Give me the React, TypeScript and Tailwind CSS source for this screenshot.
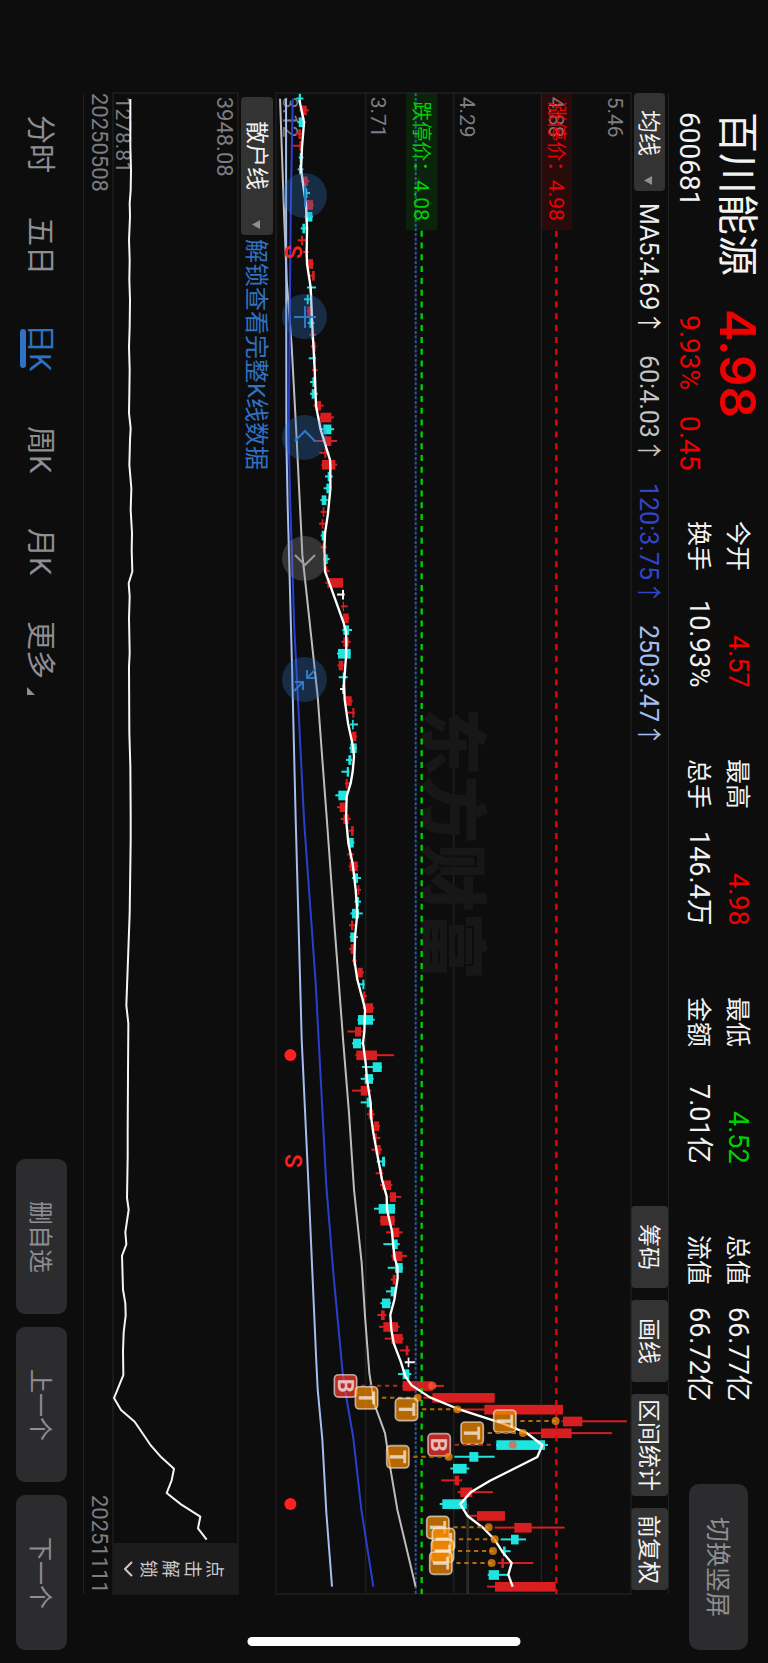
import { Fragment } from 'react'
import type { ReactNode } from 'react'

// The whole screen is a landscape view turned clockwise: with vertical-rl and
// sideways glyphs, "rows" run from top to bottom and "columns" from right to left.

type Candle = [number, number, number, number, 'r' | 'c' | 'w']

// low, body start, body end, high, colour
const candles: Candle[] = [
  [199, 206, 213, 220, 'c'], [208, 214, 230, 236, 'r'], [202, 206, 223, 226, 'c'], [198, 205, 213, 216, 'r'],
  [188, 208, 214, 214, 'r'], [206, 209, 216, 220, 'c'], [203, 207, 214, 220, 'c'], [212, 218, 233, 238, 'r'],
  [224, 228, 232, 240, 'c'], [224, 230, 249, 251, 'r'], [224, 227, 247, 249, 'c'], [212, 217, 226, 230, 'c'],
  [203, 213, 219, 228, 'r'], [219, 226, 229, 236, 'r'], [230, 232, 249, 251, 'r'], [238, 246, 254, 254, 'r'],
  [231, 238, 243, 258, 'c'], [222, 230, 236, 240, 'c'], [230, 232, 247, 249, 'r'], [233, 238, 249, 253, 'c'],
  [238, 243, 247, 258, 'r'], [242, 250, 257, 259, 'r'], [236, 250, 256, 258, 'c'], [246, 252, 256, 263, 'r'],
  [240, 247, 253, 257, 'c'], [240, 245, 254, 263, 'c'], [250, 256, 273, 281, 'r'], [268, 271, 304, 312, 'r'],
  [273, 280, 304, 312, 'c'], [250, 282, 304, 321, 'r'], [268, 283, 289, 298, 'r'], [274, 276, 316, 321, 'r'],
  [285, 293, 299, 308, 'c'], [281, 289, 297, 304, 'c'], [271, 275, 289, 293, 'c'], [272, 278, 283, 290, 'r'],
  [267, 275, 280, 286, 'r'], [272, 275, 284, 286, 'c'], [272, 278, 284, 290, 'r'], [280, 285, 293, 299, 'c'],
  [282, 286, 292, 299, 'r'], [286, 292, 339, 340, 'r'], [321, 336, 342, 344, 'w'], [333, 338, 342, 353, 'r'],
  [336, 339, 356, 358, 'r'], [337, 340, 357, 366, 'c'], [334, 340, 356, 362, 'r'], [321, 324, 362, 362, 'c'],
  [322, 326, 340, 345, 'r'], [326, 338, 342, 353, 'c'], [330, 337, 342, 345, 'w'], [342, 344, 365, 368, 'r'],
  [353, 367, 373, 375, 'r'], [360, 366, 371, 384, 'c'], [361, 365, 379, 381, 'r'], [358, 361, 380, 381, 'c'],
  [348, 355, 364, 366, 'c'], [334, 350, 357, 358, 'c'], [345, 347, 353, 362, 'r'], [316, 325, 352, 354, 'c'],
  [321, 329, 346, 349, 'r'], [332, 340, 356, 362, 'r'], [356, 363, 371, 372, 'r'], [353, 356, 371, 373, 'c'],
  [352, 358, 363, 372, 'r'], [356, 359, 383, 385, 'r'], [366, 375, 384, 393, 'c'], [376, 383, 388, 393, 'r'],
  [374, 379, 387, 393, 'c'], [361, 366, 387, 398, 'c'], [357, 363, 370, 376, 'r'], [359, 361, 378, 384, 'c'],
  [357, 362, 373, 378, 'r'], [366, 369, 378, 380, 'r'], [377, 383, 398, 402, 'r'], [384, 397, 403, 404, 'c'],
  [392, 399, 405, 411, 'r'], [398, 405, 429, 433, 'r'], [382, 384, 429, 434, 'c'], [352, 375, 393, 400, 'r'],
  [366, 369, 393, 400, 'c'], [376, 379, 441, 492, 'r'], [396, 428, 455, 456, 'c'], [392, 404, 429, 431, 'c'],
  [366, 392, 413, 424, 'r'], [392, 410, 421, 424, 'c'], [411, 416, 430, 434, 'r'], [426, 432, 447, 450, 'r'],
  [428, 433, 440, 451, 'r'], [424, 436, 452, 456, 'r'], [440, 456, 465, 466, 'c'], [437, 450, 457, 460, 'r'],
  [450, 456, 483, 487, 'r'], [478, 480, 498, 514, 'r'], [432, 446, 495, 496, 'c'], [449, 451, 494, 496, 'r'],
  [468, 483, 508, 518, 'r'], [460, 487, 503, 509, 'c'], [484, 487, 517, 531, 'r'], [473, 495, 518, 519, 'c'],
  [482, 488, 497, 501, 'r'], [468, 482, 495, 498, 'c'], [451, 456, 481, 483, 'c'], [442, 453, 464, 469, 'r'],
  [447, 460, 504, 509, 'r'], [464, 484, 518, 521, 'r'], [509, 527, 535, 540, 'r'], [524, 533, 538, 556, 'w'],
  [504, 518, 538, 544, 'c'], [517, 518, 608, 642, 'r'], [580, 607, 794, 794, 'r'], [680, 763, 999, 999, 'r'],
  [995, 999, 1057, 1191, 'r'], [897, 933, 1025, 1146, 'r'], [798, 799, 945, 954, 'c'], [673, 718, 745, 794, 'c'],
  [661, 669, 710, 718, 'c'], [634, 674, 687, 696, 'r'], [683, 691, 727, 789, 'r'], [629, 637, 710, 710, 'c'],
  [712, 741, 825, 825, 'r'], [794, 853, 905, 1004, 'r'], [812, 843, 866, 888, 'c'], [814, 819, 827, 842, 'c'],
  [803, 814, 822, 910, 'r'], [773, 776, 807, 834, 'c'], [771, 795, 977, 977, 'r'],
]

const candleColors = { r: '#d81e1e', c: '#1fe5e0', w: '#f5f5f5' }

const ma5 =
  '208,60 222,127 216,200 213,268 228,375 231,445 230,517 231,552 242,623 246,720 254,870 258,978 272,1050 300,1140 301,1160 301,1227 294,1300 285,1360 283,1404 285,1475 300,1515 341,1630 348,1655 349,1690 348,1730 342,1810 344,1860 354,1930 369,2000 372,2030 368,2075 362,2110 350,2150 348,2215 355,2290 368,2352 377,2430 382,2500 375,2572 373,2640 382,2700 402,2775 405,2790 403,2855 399,2890 407,2950 411,3000 422,3070 423,3110 430,3160 443,3230 456,3300 470,3350 471,3390 486,3455 489,3490 494,3535 502,3560 503,3595 493,3660 481,3705 484,3750 491,3790 512,3845 526,3890 545,3917 600,3953 690,3990 820,4032 890,4060 937,4096 922,4132 780,4203 722,4238 691,4273 713,4309 760,4345 795,4381 817,4416 845,4450 835,4485 848,4521'
const ma60 =
  '150,56 162,400 170,600 185,800 200,1080 217,1425 243,1665 263,1850 280,2080 292,2240 315,2560 340,2890 357,3100 372,3330 395,3550 405,3710 418,3880 432,3970 465,4060 480,4160 502,4290 557,4521'
const ma120 = '188,56 182,400 176,1080 181,1280 193,1650 203,1840 222,2220 257,2710 289,3320 310,3580 338,3880 345,3930 370,4075 394,4290 430,4521'
const ma250 = '168,56 169,1080 173,1280 186,1760 197,2220 215,2880 236,3330 259,3850 263,3930 277,4080 289,4300 306,4521'

const retailLine =
  '390,57 390,200 392,270 391,330 388,370 389,410 386,480 388,540 387,600 389,660 388,740 386,800 388,870 387,940 386,1000 391,1045 389,1080 387,1155 393,1225 391,1290 395,1360 394,1410 396,1475 385,1510 388,1550 386,1615 388,1720 386,1760 387,1960 390,2060 391,2200 391,2280 388,2500 378,2777 384,2831 383,2980 382,3160 382,3232 380,3354 385,3390 375,3457 378,3494 365,3528 368,3630 375,3671 376,3707 370,3758 368,3814 369,3886 341,3955 362,3991 403,4026 452,4098 483,4133 521,4167 514,4202 499,4240 542,4274 600,4311 593,4346 619,4380'

// letter, badge x, y, dashed line end, dot x
const trades: [string, number, number, number, number][] = [
  ['B', 346, 3918, 502, 607],
  ['T', 409, 3954, 563, 563],
  ['T', 529, 3989, 682, 682],
  ['T', 824, 4024, 977, 977],
  ['T', 726, 4060, 879, 879],
  ['B', 627, 4095, 785, 848],
  ['T', 503, 4131, 656, 656],
  ['T', 623, 4343, 776, 776],
  ['T', 640, 4379, 794, 794],
  ['T', 637, 4414, 789, 789],
  ['T', 632, 4450, 785, 785],
]

const axis: [string, number][] = [
  ['5.46', 1135],
  ['4.88', 956],
  ['4.29', 689],
  ['3.71', 424],
  ['3.12', 160],
]

const stats = [
  ['今开', '4.57', 'text-[#f00000]', '换手', '10.93%'],
  ['最高', '4.98', 'text-[#f00000]', '总手', '146.4万'],
  ['最低', '4.52', 'text-[#00d000]', '金额', '7.01亿'],
  ['总值', '66.77亿', 'text-[#f2f2f2]', '流值', '66.72亿'],
]

const averages = [
  ['MA5:4.69', 'text-[#ececec]'],
  ['60:4.03', 'text-[#c4c4c4]'],
  ['120:3.75', 'text-[#3344cc]'],
  ['250:3.47', 'text-[#a4bdf2]'],
]

const tabs = ['分时', '五日', '日K', '周K', '月K', '更多']

function SideText({ x, y, size = 63, fill, weight, children }: {
  x: number
  y: number
  size?: number
  fill: string
  weight?: number
  children: ReactNode
}) {
  return (
    <text transform={`translate(${x} ${y}) rotate(90)`} fontSize={size} fill={fill} fontWeight={weight}>
      {children}
    </text>
  )
}

function PriceChart() {
  return (
    <svg viewBox="138 39 1065 4504" className="absolute inset-0 size-full overflow-visible [writing-mode:horizontal-tb]">
      <g stroke="#212121" strokeWidth="4" fill="none">
        <rect x="138" y="39" width="1065" height="4504" />
        <path d="M407 39V4543M671 39V4543M934 39V4543" />
        <path d="M713 4273V4543" stroke="#2c2c2c" strokeWidth="8" />
      </g>
      <SideText x={594} y={1882} size={205} fill="#171717" weight={900}>东方财富</SideText>

      {axis.map(([label, x]) => (
        <SideText key={label} x={x} y={50} fill="#7d7d82">{label}</SideText>
      ))}

      {candles.map(([low, from, to, high, color], i) => {
        const y = 55.5 + i * 35.44
        return (
          <g key={i} fill={candleColors[color]}>
            <rect x={low} y={y - 3} width={high - low} height="6" />
            <rect x={from} y={y - 14} width={to - from} height="29" />
          </g>
        )
      })}

      <path d="M557 39V4543" stroke="#2a5a94" strokeWidth="6" strokeDasharray="9 5" />
      <rect x="528" y="39" width="94" height="412" rx="8" fill="#00c800" fillOpacity="0.12" />
      <SideText x={553} y={64} size={60} fill="#00d000">跌停价：</SideText>
      <SideText x={553} y={300} fill="#00d000">4.08</SideText>
      <path d="M575 452V4543" stroke="#00d000" strokeWidth="7" strokeDasharray="18 17.44" />
      <rect x="934" y="39" width="92" height="412" rx="8" fill="#f00000" fillOpacity="0.12" />
      <SideText x={957} y={64} size={60} fill="#f00000">涨停价：</SideText>
      <SideText x={957} y={300} fill="#f00000">4.98</SideText>
      <path d="M979 452V4543" stroke="#f00000" strokeWidth="7" strokeDasharray="18 17.44" />

      <g fill="none" strokeWidth="6" strokeLinejoin="round">
        <polyline points={ma60} stroke="#bdbdbd" />
        <polyline points={ma120} stroke="#2b3fcf" />
        <polyline points={ma250} stroke="#a4bdf2" />
        <polyline points={ma5} stroke="#fff" strokeWidth="7" />
      </g>

      <SideText x={165} y={495} size={69} fill="#ff2020" weight={500}>S</SideText>
      <SideText x={165} y={3223} size={69} fill="#ff2020" weight={500}>S</SideText>
      <circle cx="181" cy="2926" r="18" fill="#ff2020" />
      <circle cx="181" cy="4273" r="18" fill="#ff2020" />

      {trades.map(([letter, x, y, end, dot]) => {
        const buy = letter === 'B'
        return (
          <Fragment key={y}>
            <path
              d={`M${x + 47} ${y}H${end}`}
              stroke={buy ? '#b02a26' : '#b36a08'}
              strokeWidth="6"
              strokeDasharray="13 11"
            />
            <circle cx={dot} cy={y} r="12" fill={buy ? '#ff5a3c' : '#f08c10'} fillOpacity="0.75" />
            <rect
              x={x - 33}
              y={y - 33}
              width="67"
              height="67"
              rx="12"
              fill={buy ? '#ff3b30' : '#ff9000'}
              fillOpacity="0.7"
              stroke="#fff"
              strokeOpacity="0.6"
              strokeWidth="5"
            />
            <text
              transform={`translate(${x - 23} ${y}) rotate(90)`}
              textAnchor="middle"
              fontSize="66"
              fontWeight="700"
              fill="#fff"
              fillOpacity="0.7"
            >
              {letter}
            </text>
          </Fragment>
        )
      })}
    </svg>
  )
}

function RetailChart() {
  return (
    <svg viewBox="338 39 375 4504" className="absolute inset-0 size-full overflow-visible [writing-mode:horizontal-tb]">
      <rect x="338" y="39" width="375" height="4504" fill="none" stroke="#212121" strokeWidth="4" />
      <SideText x={651} y={50} size={66} fill="#7d7d82">3948.08</SideText>
      <SideText x={348} y={50} fill="#7d7d82">1278.81</SideText>
      <polyline points={retailLine} fill="none" stroke="#f5f5f5" strokeWidth="6" strokeLinejoin="round" />
    </svg>
  )
}

function RoundButton({ label, muted, children }: { label: string; muted?: boolean; children: ReactNode }) {
  return (
    <button
      aria-label={label}
      className={`flex size-[45px] items-center justify-center rounded-full ${
        muted ? 'bg-[#8e8e93]/30 text-[#9a9a9e]' : 'bg-[#2f78c8]/30 text-[#2f78c8]'
      }`}
    >
      <svg viewBox="0 0 24 24" className="size-6" fill="none" stroke="currentColor" strokeWidth="2">
        {children}
      </svg>
    </button>
  )
}

function Caret() {
  return (
    <svg viewBox="0 0 8 9" className="h-[9px] w-2 shrink-0" fill="#8e8e93">
      <path d="M0 4.5L8 0V9Z" />
    </svg>
  )
}

export default function App() {
  return (
    <div className="relative flex h-screen w-full flex-col overflow-hidden bg-[#0d0d0d] font-['Roboto','Noto_Sans_CJK_SC',sans-serif] whitespace-nowrap text-[#f2f2f2] [writing-mode:vertical-rl] [text-orientation:sideways]">
      <header className="flex w-[99px] shrink-0 items-start pt-28 pr-[11px] pb-[13px]">
        <div className="flex h-[409px] shrink-0">
          <div className="flex h-[197px] flex-col gap-3">
            <h1 className="text-[41px] leading-10">百川能源</h1>
            <p className="text-[28px] leading-8">600681</p>
          </div>
          <div className="flex flex-col gap-3 text-[#f00000]">
            <p className="font-['Inter',sans-serif] text-[49px] leading-10 font-semibold">4.98</p>
            <p className="flex gap-[26px] px-[6px] text-[28px] leading-8">
              <span>9.93%</span>
              <span>0.45</span>
            </p>
          </div>
        </div>
        <dl className="grid flex-1 grid-cols-4 gap-x-[71px] text-[25px] leading-[39px]">
          {stats.map(([name, value, color, name2, value2]) => (
            <div key={name}>
              <div className="flex justify-between">
                <dt>{name}</dt>
                <dd className={`text-[27px] ${color}`}>{value}</dd>
              </div>
              <div className="flex justify-between">
                <dt>{name2}</dt>
                <dd className="text-[27px]">{value2}</dd>
              </div>
            </div>
          ))}
        </dl>
        <button className="mt-[82px] mr-[9px] h-[166px] w-[59px] shrink-0 rounded-[10px] bg-[#2c2c2e] pr-[3px] text-[25px] text-[#8e8e93]">
          切换竖屏
        </button>
      </header>

      <div className="mt-[93px] mb-[69px] flex w-[38px] shrink-0 items-center border-r border-[#212121]">
        <button className="flex h-[98px] w-[31px] items-center justify-between rounded-[4px] bg-[#333] pt-[17px] pr-[3px] pb-[6px] text-[23px]">
          均线
          <Caret />
        </button>
        <div className="flex flex-1 gap-5 px-3 pr-[3px] text-[25px]">
          {averages.map(([text, color]) => (
            <span key={text} className={color}>{text}↑</span>
          ))}
        </div>
        <div className="flex gap-3 self-stretch pb-1 text-[23px]">
          {['筹码', '画线', '区间统计', '前复权'].map((tool) => (
            <button key={tool} className="min-h-[82px] rounded-[4px] bg-[#333] px-[5px] pr-[3px]">
              {tool}
            </button>
          ))}
        </div>
      </div>

      <main className="relative mt-[93px] mb-[69px] flex-[355]">
        <PriceChart />
        <div className="absolute top-20 left-[6px] flex gap-[76px]">
          <RoundButton label="缩小">
            <path d="M12 1V23" />
          </RoundButton>
          <RoundButton label="放大">
            <path d="M12 1V23M1 12H23" />
          </RoundButton>
          <RoundButton label="向左">
            <path d="M2 15L12 5L22 15" />
          </RoundButton>
          <RoundButton label="向右" muted>
            <path d="M2 8L12 18L22 8" />
          </RoundButton>
          <RoundButton label="收起">
            <path d="M14 2V10H22M14 10L23 1M10 22V14H2M10 14L1 23" />
          </RoundButton>
        </div>
      </main>

      <div className="mt-[93px] mb-[69px] flex w-[38px] shrink-0 items-center gap-1">
        <button className="mt-1 flex h-[138px] w-8 items-center justify-between rounded-[4px] bg-[#333] pt-6 pr-[3px] pb-[6px] text-[23px]">
          散户线
          <Caret />
        </button>
        <a href="#unlock" className="pr-[3px] text-[24px] text-[#2f72c3]">
          解锁查看完整K线数据
        </a>
      </div>

      <section className="relative mt-[93px] mb-[69px] flex flex-[125] justify-end">
        <RetailChart />
        <button className="relative flex h-[51px] flex-col items-center justify-center gap-1 bg-[#1c1c1c] pr-[3px] text-[18px] text-[#c8c8c8]">
          <span className="h-[18px] leading-[22px] whitespace-normal">点击解锁</span>
          <svg viewBox="0 0 9 16" className="h-4 w-[9px]" fill="none" stroke="currentColor" strokeWidth="2">
            <path d="M8 1L1 8L8 15" />
          </svg>
        </button>
      </section>

      <div className="mt-[93px] mb-[69px] flex w-[30px] shrink-0 justify-between border-l border-[#212121] text-[22px] leading-7 text-[#7d7d82]">
        <time>20250508</time>
        <time>20251111</time>
      </div>

      <footer className="mt-[93px] mr-4 mb-[13px] ml-4 flex w-[51px] shrink-0 justify-between text-[#8e8e93]">
        <nav className="flex text-[29px]">
          {tabs.map((tab) => (
            <button
              key={tab}
              className={`relative flex h-[102px] items-center justify-center pr-1 ${tab === '日K' ? 'text-[#2f72c3]' : ''} ${tab === '更多' ? 'pb-2' : ''}`}
            >
              {tab}
              {tab === '日K' && <span className="absolute left-1 h-[39px] w-[6px] rounded-full bg-[#2f72c3]" />}
              {tab === '更多' && (
                <svg viewBox="0 0 8 8" className="absolute bottom-[10px] left-[11px] size-2" fill="currentColor">
                  <path d="M0 0V8H8Z" />
                </svg>
              )}
            </button>
          ))}
        </nav>
        <div className="flex gap-[13px] text-[24px]">
          {['删自选', '上一个', '下一个'].map((action) => (
            <button key={action} className="h-[155px] rounded-[9px] bg-[#2c2c2e] pr-[3px]">
              {action}
            </button>
          ))}
        </div>
      </footer>

      <div className="absolute bottom-[17px] left-1/2 h-[9px] w-[273px] -translate-x-1/2 rounded-full bg-white" />
    </div>
  )
}
